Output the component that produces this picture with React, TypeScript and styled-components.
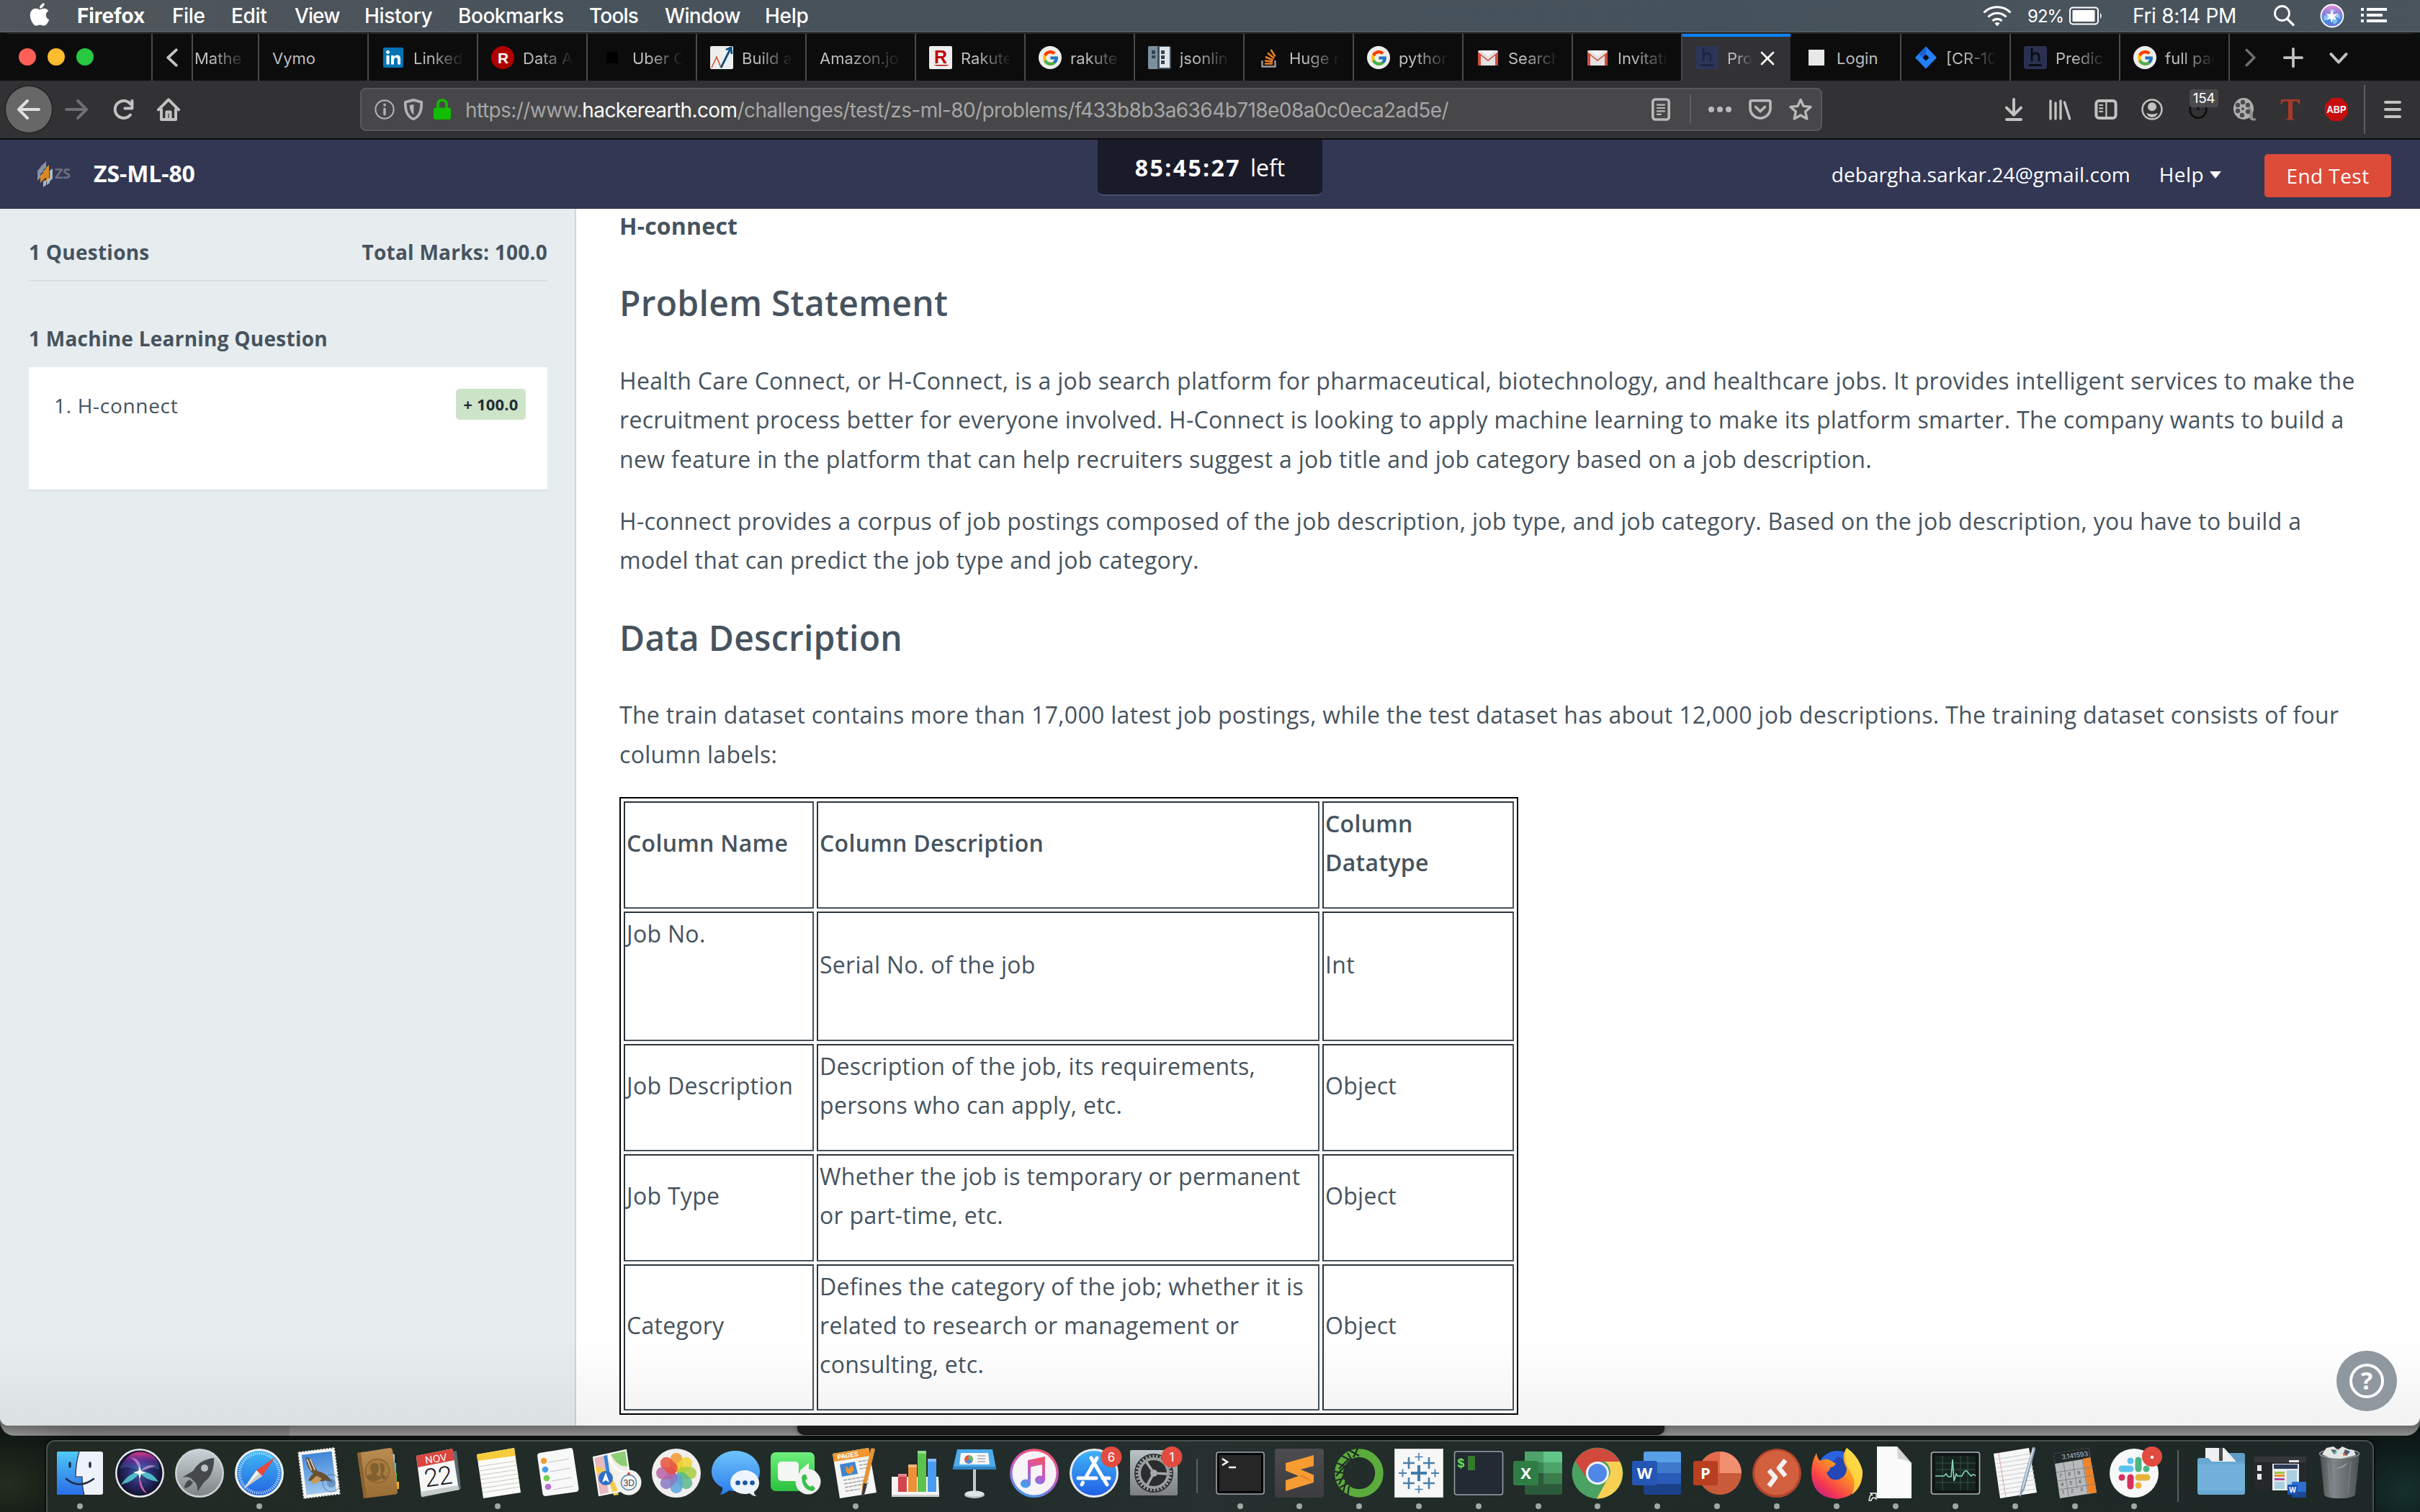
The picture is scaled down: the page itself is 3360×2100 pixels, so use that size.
import React from "react";
import styled, { createGlobalStyle, css } from "styled-components";
import { FaApple } from "react-icons/fa";
import { FcGoogle } from "react-icons/fc";

const ui = `Inter, "Liberation Sans", sans-serif`;
const body = `"Open Sans", "Noto Sans", sans-serif`;

const Global = createGlobalStyle`
  * { box-sizing: border-box; }
  html, body { margin: 0; padding: 0; }
  body { width: 3360px; height: 2100px; overflow: hidden; background: #0c1412; }
  svg { display: block; flex: none; }
  p, h2 { margin: 0; }
`;

/* ---------- desktop ---------- */

const Desktop = styled.div`
  width: 3360px;
  height: 2100px;
  display: flex;
  flex-direction: column;
  overflow: hidden;
  font-family: ${ui};
  background:
    radial-gradient(ellipse 120px 90px at 10px 2060px, #252c1f, transparent),
    radial-gradient(ellipse 110px 90px at 3340px 2070px, #16302e, transparent),
    #0a1210;
`;

const MenuBar = styled.div`
  height: 46px;
  flex: none;
  display: flex;
  align-items: center;
  padding: 0 46px 2px 38px;
  color: #fff;
  background: linear-gradient(90deg, #50565b 0, #47525b 1000px, #46525b 2400px, #4a545d 100%);
  box-shadow: inset 0 -1px 0 #0a0a0a, inset 0 -2px 0 #626a70;
`;

const MenuItem = styled.span<{ $w: number; $ls?: number; $bold?: boolean }>`
  width: ${(p) => p.$w}px;
  flex: none;
  white-space: nowrap;
  font-size: 28px;
  line-height: 44px;
  font-weight: ${(p) => (p.$bold ? 700 : 450)};
  letter-spacing: ${(p) => p.$ls ?? 0}px;
`;

const Apple = styled(FaApple)`
  width: 36px;
  height: 36px;
  margin: 0 34px 4px -1px;
`;

const Status = styled.div`
  margin-left: auto;
  display: flex;
  align-items: center;
`;

const Percent = styled.span`
  width: 58px;
  margin-left: 22px;
  font-size: 24px;
  letter-spacing: -1px;
  white-space: nowrap;
`;

const Clock = styled.span`
  width: 195px;
  margin-left: 41px;
  font-size: 28px;
  letter-spacing: -0.3px;
  white-space: nowrap;
`;

const SiriSlot = styled.span`
  width: 90px;
  display: flex;
  justify-content: center;
  padding-left: 10px;
`;

/* ---------- browser chrome ---------- */

const Browser = styled.div`
  height: 1934px;
  flex: none;
  display: flex;
  flex-direction: column;
  position: relative;
  overflow: hidden;
  border-radius: 12px;
  z-index: 1;
`;

const TabStrip = styled.div`
  height: 66px;
  flex: none;
  display: flex;
  background: #0c0c0d;
  border-top: 1px solid #2d2d2e;
`;

const Lights = styled.div`
  width: 212px;
  display: flex;
  gap: 16px;
  padding: 20px 0 0 26px;
  border-right: 2px solid #4a4a4b;
`;

const Light = styled.i<{ $c: string }>`
  width: 24px;
  height: 24px;
  border-radius: 50%;
  background: ${(p) => p.$c};
`;

const TabArrow = styled.div<{ $w: number; $line?: boolean }>`
  width: ${(p) => p.$w}px;
  display: flex;
  align-items: center;
  justify-content: center;
  ${(p) => p.$line && css`border-right: 2px solid #4a4a4b;`}
`;

const Tab = styled.div<{ $active?: boolean; $first?: boolean }>`
  width: ${(p) => (p.$first ? 92 : 152)}px;
  flex: none;
  display: flex;
  align-items: center;
  gap: 12px;
  padding: ${(p) => (p.$first ? "3px 18px 0 2px" : "3px 20px 0 18px")};
  border-right: 2px solid #4a4a4b;
  ${(p) =>
    p.$active &&
    css`
      background: #323234;
      border-right-color: #0c0c0d;
      box-shadow: inset 0 4px 0 #0a84ff;
      padding-right: 22px;
    `}
`;

const TabTitle = styled.span<{ $fade?: boolean }>`
  flex: 1;
  min-width: 0;
  overflow: hidden;
  white-space: nowrap;
  font-size: 22px;
  line-height: 32px;
  color: #bdbdbe;
  ${(p) => p.$fade && css`mask-image: linear-gradient(90deg, #000 35%, rgba(0, 0, 0, 0.05) 100%);`}
`;

const Fav = styled.span<{ $bg?: string; $round?: boolean }>`
  width: 32px;
  height: 32px;
  flex: none;
  display: flex;
  align-items: center;
  justify-content: center;
  overflow: hidden;
  margin-bottom: 2px;
  background: ${(p) => p.$bg ?? "transparent"};
  border-radius: ${(p) => (p.$round ? "50%" : "2px")};
`;

const Toolbar = styled.div`
  height: 82px;
  flex: none;
  display: flex;
  align-items: center;
  padding-left: 8px;
  background: #323234;
  border-bottom: 2px solid #0c0c0d;
`;

const BackButton = styled.div`
  width: 64px;
  height: 64px;
  display: flex;
  align-items: center;
  justify-content: center;
  border-radius: 50%;
  background: #676767;
  box-shadow: 0 0 0 1.5px #232324;
`;

const Slot = styled.div<{ $w: number }>`
  width: ${(p) => p.$w}px;
  height: 60px;
  flex: none;
  display: flex;
  align-items: center;
  justify-content: center;
  position: relative;
`;

const UrlBar = styled.div`
  width: 2030px;
  height: 60px;
  margin: 0 234px;
  display: flex;
  align-items: center;
  padding-left: 12px;
  border: 2px solid #59595b;
  border-radius: 8px;
  background: #474749;
`;

const Url = styled.span`
  flex: 1;
  padding: 2px 0 0 12px;
  font-size: 28px;
  letter-spacing: -0.57px;
  color: #a6a6a7;
  white-space: nowrap;
  b {
    font-weight: 400;
    color: #f9f9fa;
  }
`;

const Rule = styled.i<{ $h: number; $m: string }>`
  width: 2px;
  height: ${(p) => p.$h}px;
  margin: ${(p) => p.$m};
  background: #5d5f66;
`;

const CountBadge = styled.span`
  position: absolute;
  top: 2px;
  left: 20px;
  width: 40px;
  height: 25px;
  border-radius: 4px;
  background: #4a4a4c;
  color: #fff;
  font-size: 19px;
  line-height: 25px;
  letter-spacing: -0.4px;
  text-align: center;
`;

/* ---------- page ---------- */

const PageHeader = styled.header`
  height: 96px;
  flex: none;
  display: grid;
  grid-template-columns: 1524px 312px 1524px;
  background: #323754;
  font-family: ${body};
  color: #fff;
`;

const Brand = styled.div`
  display: flex;
  align-items: center;
  gap: 28px;
  padding-left: 50px;
  font-size: 32px;
  font-weight: 700;
  letter-spacing: -0.1px;
  span {
    margin-top: -3px;
  }
`;

const Timer = styled.div`
  height: 78px;
  display: flex;
  justify-content: center;
  gap: 13px;
  padding-top: 5px;
  border-bottom: 2px solid #494c6f;
  border-radius: 0 0 8px 8px;
  background: #1a1b29;
  font-size: 32px;
  line-height: 68px;
  b {
    letter-spacing: 2.4px;
  }
`;

const Account = styled.div`
  display: flex;
  justify-content: flex-end;
  align-items: center;
  padding: 4px 40px 0 0;
  font-size: 28px;
  letter-spacing: 0.07px;
`;

const Email = styled.span`
  margin-top: -5px;
`;

const HelpLink = styled.span`
  margin: -5px 60px 0 40px;
  display: flex;
  align-items: center;
  gap: 8px;
  letter-spacing: 0.4px;
  &::after {
    content: "";
    margin-top: 3px;
    border: 8px solid transparent;
    border-top: 10px solid #fff;
    border-bottom: 0;
  }
`;

const EndTest = styled.button`
  width: 176px;
  height: 60px;
  padding: 0;
  border: 0;
  border-radius: 5px;
  background: #dd4b39;
  color: #fff;
  font: 28px/58px ${body};
  letter-spacing: 0.45px;
`;

const PageBody = styled.div`
  flex: 1;
  min-height: 0;
  display: flex;
  font-family: ${body};
  color: #46535e;
  background: #fff;
`;

const Sidebar = styled.aside`
  width: 800px;
  flex: none;
  padding: 30px 38px 0 40px;
  background: #e7ecef;
  border-right: 2px solid #cfd4d7;
  font-size: 28px;
`;

const Totals = styled.div`
  height: 71px;
  display: flex;
  justify-content: space-between;
  padding-bottom: 11px;
  border-bottom: 2px solid #d8dde0;
  font-weight: 700;
  line-height: 60px;
  letter-spacing: 0.25px;
  white-space: nowrap;
`;

const GroupTitle = styled.div`
  padding-top: 49px;
  height: 119px;
  font-weight: 700;
  line-height: 60px;
  letter-spacing: 0.25px;
`;

const Card = styled.div`
  width: 720px;
  height: 172px;
  display: flex;
  justify-content: space-between;
  align-items: flex-start;
  padding: 30px 30px 0 35px;
  border-bottom: 2px solid #dde0e2;
  background: #fff;
  line-height: 46px;
  letter-spacing: 0.7px;
`;

const Marks = styled.span`
  width: 97px;
  height: 43px;
  border-radius: 5px;
  background: #cde4c9;
  color: #232c34;
  font-size: 22px;
  font-weight: 700;
  line-height: 43px;
  letter-spacing: 0.2px;
  text-align: center;
`;

const Main = styled.main`
  flex: 1;
  padding: 0 80px 0 60px;
  margin-top: -3px;
  clip-path: inset(3px 0 0 0);
  font-size: 32px;
  line-height: 54.4px;
  letter-spacing: 0.3px;
  p {
    margin-bottom: 32px;
  }
`;

const Line = styled.span`
  display: block;
  white-space: nowrap;
`;

const Strong = styled.p`
  font-weight: 700;
  letter-spacing: 0.2px;
`;

const Heading = styled.h2`
  font-size: 48px;
  font-weight: 600;
  line-height: 96.4px;
  letter-spacing: 0.28px;
  margin-bottom: 32px;
`;

const Table = styled.table`
  width: 1248px;
  table-layout: fixed;
  border: 2px solid #000;
  border-collapse: separate;
  border-spacing: 4px;
`;

const Cell = styled.td<{ $w?: number; $top?: boolean; $h?: number; $head?: boolean }>`
  ${(p) => p.$w && css`width: ${p.$w}px;`}
  ${(p) => p.$h && css`height: ${p.$h}px;`}
  padding: 2px;
  vertical-align: ${(p) => (p.$top ? "top" : "middle")};
  border: 2px solid;
  border-color: #2b343b #46535e #46535e #2b343b;
  ${(p) => p.$head && css`font-weight: 600;`}
`;

const BottomShade = styled.div`
  position: absolute;
  left: 0;
  right: 0;
  bottom: 0;
  height: 120px;
  pointer-events: none;
  background: linear-gradient(180deg, rgba(0, 0, 0, 0) 0, rgba(0, 0, 0, 0.05) 100%);
`;

const HelpBubble = styled.div`
  position: absolute;
  right: 32px;
  bottom: 20px;
  width: 84px;
  height: 84px;
  border-radius: 50%;
  background: #8f979f;
  display: flex;
  align-items: center;
  justify-content: center;
  span {
    width: 48px;
    height: 48px;
    border: 4px solid #fff;
    border-radius: 50%;
    color: #fff;
    font: 700 34px/39px "Open Sans", sans-serif;
    text-align: center;
  }
`;

/* ---------- windows peeking out below, dock ---------- */

const Behind = styled.div`
  height: 26px;
  flex: none;
  margin-top: -12px;
  padding-top: 12px;
  display: flex;
  justify-content: center;
  border-radius: 0 0 20px 20px;
  background: linear-gradient(180deg, rgba(0, 0, 0, 0.25) 12px, rgba(0, 0, 0, 0) 100%),
    linear-gradient(90deg, #959595 0, #7e7e7e 100px, #7e7e7e 402px, #8e8e8e 402px);
`;

const BehindPanel = styled.div`
  width: 1204px;
  height: 13px;
  margin-left: 58px;
  border-radius: 0 0 10px 10px;
  background: #1b1b1b;
  border-bottom: 1px solid #050505;
  box-shadow: 0 0 6px rgba(0, 0, 0, 0.5);
`;

const Dock = styled.div`
  height: 120px;
  width: 3232px;
  flex: none;
  margin: 6px 0 0 64px;
  display: flex;
  padding: 8px 0 0 4px;
  border: 2px solid #48514e;
  border-radius: 12px;
  background: linear-gradient(90deg, #212a24 0, #222c2a 40%, #26312f 50%, #212b28 60%, #1e2826 100%);
  box-shadow: 0 0 0 1.5px #050908;
`;

const DockItem = styled.div<{ $w?: number; $run?: boolean }>`
  width: ${(p) => p.$w ?? 82.8}px;
  flex: none;
  display: flex;
  flex-direction: column;
  align-items: center;
  gap: 6px;
  svg {
    overflow: visible;
  }
  &::after {
    content: "";
    width: 8px;
    height: 8px;
    border-radius: 50%;
    background: ${(p) => (p.$run ? "#a0a8a5" : "transparent")};
  }
`;

const DockRule = styled.i<{ $w: number; $h: number; $t: number }>`
  width: ${(p) => p.$w}px;
  display: flex;
  justify-content: center;
  &::after {
    content: "";
    width: 2px;
    height: ${(p) => p.$h}px;
    margin-top: ${(p) => p.$t}px;
    background: #56605d;
  }
`;

/* ---------- small glyphs ---------- */

type GP = { children: React.ReactNode; c?: string; s?: number; w?: number };
const G = ({ children, c = "#c2c2c3", s = 32, w = 2 }: GP) => (
  <svg width={s} height={s} viewBox="0 0 16 16" fill="none" stroke={c} strokeWidth={w} strokeLinecap="round" strokeLinejoin="round">
    {children}
  </svg>
);

const Wifi = () => (
  <svg width="40" height="30" viewBox="0 0 40 30" fill="none" stroke="#fff" strokeWidth="3.2">
    <path d="M1.5 10.5a26 26 0 0 1 37 0M7.5 16.5a17.5 17.5 0 0 1 25 0M13.5 22a9.5 9.5 0 0 1 13 0" />
    <path d="M16.5 25.5a5 5 0 0 1 7 0L20 29.500z" fill="#fff" stroke="none" />
  </svg>
);
const Battery = () => (
  <svg width="47" height="26" viewBox="0 0 47 26">
    <rect x="1" y="1.500" width="39" height="23" rx="4" fill="none" stroke="#fff" strokeWidth="2" />
    <rect x="4.500" y="5" width="31" height="16" rx="1" fill="#fff" />
    <path d="M43 8.500q3.500 4.500 0 9z" fill="#fff" />
  </svg>
);
const MenuSiri = () => (
  <svg width="34" height="34" viewBox="0 0 34 34">
    <defs>
      <linearGradient id="msr" x1="0" y1="0" x2="0" y2="1">
        <stop offset="0" stopColor="#e88bd8" />
        <stop offset=".4" stopColor="#8c7fd8" />
        <stop offset=".7" stopColor="#3f8ee0" />
        <stop offset="1" stopColor="#6a6fd0" />
      </linearGradient>
    </defs>
    <circle cx="17" cy="17" r="15.500" fill="url(#msr)" stroke="#fff" strokeWidth="1.800" />
    <path d="M17 17L6 24q-2-6 2-8zM17 17l11 4q1-6-4-8zM17 17l2 12q5-2 5-6zM17 17l-4-8q5-2 8 0z" fill="#9fe6f7" opacity=".65" />
    <path d="M17 9l1.500 6 6-1-4 4 3 5-5-2-2.500 6-1.500-6-6 2 4-5-4-4 6 .5z" fill="#fff" opacity=".95" />
  </svg>
);
const Siri = () => (
  <svg width="72" height="72" viewBox="0 0 72 72">
    <defs>
      <radialGradient id="sb">
        <stop offset="0" stopColor="#3a5a9a" />
        <stop offset=".55" stopColor="#2a2a6c" />
        <stop offset="1" stopColor="#11122a" />
      </radialGradient>
      <linearGradient id="sl" x1="0" y1="0" x2="0" y2="1">
        <stop offset="0" stopColor="#ff3b8e" stopOpacity=".85" />
        <stop offset=".5" stopColor="#8b3fd0" stopOpacity=".4" />
        <stop offset="1" stopColor="#1fd0e8" stopOpacity=".2" />
      </linearGradient>
    </defs>
    <circle cx="36" cy="36" r="34" fill="#e9e6ee" />
    <circle cx="36" cy="36" r="31.500" fill="url(#sb)" />
    <path d="M8 30Q20 3 42 7T63 32Q50 24 36 34Q24 24 8 30z" fill="url(#sl)" />
    <path d="M36 35Q22 34 10 52Q28 48 36 35Q44 46 62 48Q52 32 36 35z" fill="#5be8e0" opacity=".75" />
    <path d="M36 34Q32 18 22 14Q41 16 36 34Q46 22 58 26Q46 30 36 34z" fill="#f5a3e6" opacity=".6" />
    <path d="M35 36Q38 56 46 64Q34 60 35 36z" fill="#ff6fc0" opacity=".8" />
    <path d="M36 27l2 6 7 2-7 2-2 7-2-7-7-2 7-2z" fill="#fff" />
  </svg>
);
const Search = () => (
  <svg width="32" height="32" viewBox="0 0 32 32" fill="none" stroke="#fff" strokeWidth="2.800">
    <circle cx="12.500" cy="12.500" r="10" />
    <path d="M19.500 20L29 29.500" strokeWidth="3.200" />
  </svg>
);
const ListIcon = () => (
  <svg width="36" height="22" viewBox="0 0 36 22" fill="#fff">
    <path d="M0 0h4v4H0zM8 0h28v4H8zM0 8h4v4H0zM8 8h22v4H8zM0 16h4v4H0zM8 16h28v4H8z" />
  </svg>
);
const CloseX = () => (
  <svg width="20" height="20" viewBox="0 0 20 20" stroke="#fff" strokeWidth="2.600" strokeLinecap="round">
    <path d="M2 2l16 16M18 2L2 18" />
  </svg>
);

const Gmail = () => (
  <svg width="28" height="21" viewBox="0 0 28 21">
    <rect width="28" height="21" rx="1.500" fill="#e3e3e3" />
    <path d="M0 21V2l14 11L28 2v19h-4V7L14 15 4 7v14z" fill="#d54b3d" />
    <path d="M4 0h20L14 8z" fill="#f4f4f4" />
  </svg>
);
const HeIcon = ({ c, bg }: { c: string; bg: string }) => (
  <svg width="32" height="32" viewBox="0 0 32 32">
    <rect width="32" height="32" rx="3" fill={bg} />
    <path d="M11 3v18M11 14q1-4 5.500-4 4.500 0 4.500 5v6M7 26.500h18" fill="none" stroke={c} strokeWidth="2.800" />
  </svg>
);
const favs: Record<string, React.ReactNode> = {
  in: (
    <Fav>
      <svg width="28" height="28" viewBox="0 0 28 28">
        <rect width="28" height="28" rx="2" fill="#0274b3" />
        <path d="M4.500 11h4v12.500h-4zM11 11h4v2q1.500-2.400 4.500-2.400 4.500 0 4.500 5.400v7.500h-4V17q0-3-2.300-3T15 17v6.500h-4z" fill="#fff" />
        <circle cx="6.500" cy="6.500" r="2.400" fill="#fff" />
      </svg>
    </Fav>
  ),
  R: (
    <Fav $bg="#b00000" $round>
      <svg width="32" height="32" viewBox="0 0 32 32">
        <text x="9" y="23.500" fontFamily="Liberation Sans" fontWeight="700" fontSize="21" fill="#fff">R</text>
      </svg>
    </Fav>
  ),
  sq: (
    <Fav>
      <svg width="16" height="16"><rect width="16" height="16" fill="#000" /></svg>
    </Fav>
  ),
  chart: (
    <Fav $bg="#eee">
      <svg width="32" height="32" viewBox="0 0 32 32" fill="none">
        <path d="M2 30L9 15l6 15" stroke="#d9502e" strokeWidth="1.600" />
        <path d="M15 30L28 4M22 5l7-3 1 9" stroke="#0d4f80" strokeWidth="2.800" />
      </svg>
    </Fav>
  ),
  rak: (
    <Fav $bg="#eee">
      <svg width="32" height="32" viewBox="0 0 32 32">
        <text x="7" y="24" fontFamily="Liberation Sans" fontWeight="700" fontSize="25" fill="#bf0000">R</text>
        <path d="M6 26h22l-4 1.500H11z" fill="#bf0000" />
      </svg>
    </Fav>
  ),
  g: (
    <Fav $bg="#eee" $round>
      <FcGoogle size={25} />
    </Fav>
  ),
  json: (
    <Fav $bg="#41525f">
      <svg width="32" height="32" viewBox="0 0 32 32">
        <rect x="0" width="13" height="32" fill="#7b8f9d" />
        <rect x="16" y="1" width="14" height="29" fill="#dfe5e9" />
        <path d="M5 6h5v5H5zM5 13h5v4H5zM18 6h5v5h-5zM18 13h5v5h-5zM18 20h5v5h-5z" fill="#34434f" />
      </svg>
    </Fav>
  ),
  so: (
    <Fav>
      <svg width="32" height="32" viewBox="0 0 32 32" fill="none">
        <path d="M6.500 20v8.500h18V20" stroke="#9a9c9f" strokeWidth="2.400" />
        <path d="M10 24.500h11M10 20.200l11 1.600M11 15l10.500 4.500M14 9.500l9 7.500M18.500 5l6 9.500" stroke="#ef8023" strokeWidth="2.500" />
      </svg>
    </Fav>
  ),
  m: (
    <Fav>
      <Gmail />
    </Fav>
  ),
  h1: (
    <Fav>
      <HeIcon c="#1c2540" bg="#2b3556" />
    </Fav>
  ),
  h2: (
    <Fav>
      <HeIcon c="#0a0d18" bg="#2a3150" />
    </Fav>
  ),
  w: (
    <Fav>
      <svg width="22" height="22"><rect width="22" height="22" fill="#e8e8e8" /></svg>
    </Fav>
  ),
  jira: (
    <Fav>
      <svg width="32" height="32" viewBox="0 0 32 32">
        <path fillRule="evenodd" d="M16 0.500L31 16 16 31.500 1 16zM16 11.500L11.500 16 16 20.500 20.500 16z" fill="#2380f8" />
        <path d="M16 11.500L11.500 16 6 10.500 16 .5z" fill="#1b5fd0" />
      </svg>
    </Fav>
  ),
};

const tabs: [string, string | null, boolean?][] = [
  ["Vymo", null, true],
  ["Linked", "in"],
  ["Data A", "R"],
  ["Uber C", "sq"],
  ["Build a", "chart"],
  ["Amazon.jo", null],
  ["Rakute", "rak"],
  ["rakute", "g"],
  ["jsonlin", "json"],
  ["Huge r", "so"],
  ["python", "g"],
  ["Search", "m"],
  ["Invitati", "m"],
  ["Pro", "h1"],
  ["Login", "w", true],
  ["[CR-10", "jira"],
  ["Predic", "h2"],
  ["full pag", "g"],
];

/* ---------- dock artwork, each on a 72 unit square ---------- */

const I = ({ children }: { children: React.ReactNode }) => (
  <svg width="72" height="72" viewBox="0 0 72 72">
    {children}
  </svg>
);
const LG = ({ id, a, b }: { id: string; a: string; b: string }) => (
  <linearGradient id={id} x1="0" y1="0" x2="0" y2="1">
    <stop offset="0" stopColor={a} />
    <stop offset="1" stopColor={b} />
  </linearGradient>
);
const Badge = ({ x, y, t, r = 14.5 }: { x: number; y: number; t: string; r?: number }) => (
  <g>
    <circle cx={x} cy={y} r={r} fill="#e24b3f" />
    <text x={x} y={y + 6} fontSize="17" fill="#fff" textAnchor="middle" fontFamily="Inter, sans-serif">{t}</text>
  </g>
);

const Finder = () => (
  <I>
    <LG id="fi" a="#4fc8f5" b="#2a6de8" />
    <rect x="4" y="6" width="64" height="60" rx="3" fill="#eef2fb" />
    <path d="M7 6h28q-5 18-5 35h9q0 14 3 25H7q-3 0-3-3V9q0-3 3-3z" fill="url(#fi)" />
    <path d="M35 6q-5 18-5 35h9q0 14 3 25" fill="none" stroke="#2b2f45" strokeWidth="1.200" />
    <path d="M22 22v5M50 22v5" stroke="#222b44" strokeWidth="3.400" strokeLinecap="round" />
    <path d="M17 44q18 15 38 0" fill="none" stroke="#222b44" strokeWidth="2.600" strokeLinecap="round" />
  </I>
);
const Launchpad = () => (
  <I>
    <LG id="lp" a="#c8d2d6" b="#7f8485" />
    <circle cx="36" cy="36" r="34" fill="#cdd3d5" />
    <circle cx="36" cy="36" r="31.500" fill="url(#lp)" />
    <path d="M56 15Q36 17 27 33l-15 9q8-2 12 1l7 7q3 5 2 12l9-13q15-11 14-34z" fill="#45494c" />
    <circle cx="43" cy="29" r="5" fill="#b9c1c4" />
    <path d="M22 45q-7 4-7 12 8-1 12-8z" fill="#45494c" />
  </I>
);
const Safari = () => (
  <I>
    <LG id="sf" a="#3fb6f5" b="#2565e0" />
    <circle cx="36" cy="36" r="34" fill="#eef0f1" />
    <circle cx="36" cy="36" r="31" fill="url(#sf)" />
    <circle cx="36" cy="36" r="27.500" fill="none" stroke="#cfe6fb" strokeWidth="4" strokeDasharray="1 1.880" />
    <path d="M58 14L40 40 32 32z" fill="#e8473c" />
    <path d="M14 58L40 40 32 32z" fill="#f3f1ee" />
    <path d="M14 58L40 40 36 36z" fill="#cfc9c4" />
  </I>
);
const Mail = () => (
  <I>
    <LG id="ml" a="#3f86d8" b="#9fc8ef" />
    <g transform="rotate(-7 36 36)">
      <rect x="10" y="3" width="52" height="66" fill="#f4f4f2" />
      <rect x="10" y="3" width="52" height="66" fill="none" stroke="#212a26" strokeWidth="2" strokeDasharray="2 2.200" />
      <rect x="15" y="8" width="42" height="56" fill="url(#ml)" />
      <path d="M21 12q5 0 8 8l5 13q12 3 19 18-9-5-15-3l-5-3-13 0q2-6 8-9-9-9-7-24z" fill="#6a4f33" />
      <path d="M22 15l4 16M26 15l5 16" stroke="#e6dccb" strokeWidth="1.500" />
      <path d="M24 45l8-6 7 5-6 5-9 1z" fill="#c49a5c" />
    </g>
    <circle cx="53" cy="50" r="12" fill="none" stroke="#3b4f6c" strokeWidth="1" opacity=".6" />
    <circle cx="53" cy="50" r="6" fill="#3a5a86" opacity=".4" />
  </I>
);
const Contacts = () => (
  <I>
    <LG id="ct" a="#b98c50" b="#9a6d35" />
    <path d="M54 8l5 2 0 14h-5z" fill="#b6c6cc" />
    <path d="M56 22h5v16h-5z" fill="#4fb7d8" />
    <path d="M57 36h5v12h-5z" fill="#62b64a" />
    <path d="M58 48h7v10h-7z" fill="#f1a935" />
    <path d="M7 8l45-7q3 0 4 3l7 58q0 3-3 3.500L16 71z" fill="url(#ct)" />
    <path d="M7 8l5-1 8 63-4 1z" fill="#8c6332" />
    <circle cx="35" cy="33" r="16.500" fill="#a77b40" stroke="#8a6230" strokeWidth="1.500" />
    <path d="M31 22q6 0 6 7 0 5-3 7v3q5 1 7 4-6 5-13 4-7-2-9-6 3-3 8-4v-3q-2-2-2-6 0-6 6-6z" fill="#83602f" />
    <path d="M40 22q6 1 5 8 0 4-2 6v3l5 2q-2 3-5 4l-4-5q2-8-1-17z" fill="#83602f" />
  </I>
);
const Calendar = () => (
  <I>
    <path d="M6 16l56-11 6 53-54 12z" fill="#5d6a72" />
    <path d="M6 12L56 2l9 57-52 9z" fill="#f7f7f7" />
    <path d="M6 12L56 2l3 16L8 28z" fill="#d8463e" />
    <path d="M12 62l52-9 2 6-53 10z" fill="#c9cccd" />
    <text x="34" y="21" transform="rotate(-9 34 20)" fontSize="14" fill="#fff" textAnchor="middle" fontFamily="Inter, sans-serif">NOV</text>
    <text x="37" y="53" transform="rotate(-8 36 44)" fontSize="35" fill="#1c1c1c" textAnchor="middle" fontFamily="Roboto, sans-serif" fontWeight="300">22</text>
  </I>
);
const Notes = () => (
  <I>
    <path d="M7 10L59 1l9 62-52 8z" fill="#fbfbf8" />
    <path d="M7 10L59 1l1.500 11L8 19z" fill="#f6cc3c" />
    <path d="M9 27l53-8M10 33l53-8M11 39l53-8M12 45l53-8M13 51l52-8M14 57l52-8M15 63l52-8" stroke="#c8c8c4" strokeWidth="1" />
  </I>
);
const Reminders = () => (
  <I>
    <path d="M11 8l43-7q3 0 3.500 3l8 53q0 4-3 5l-43 6q-3 0-4-3L8 12q0-3 3-4z" fill="#f8f8f8" />
    <circle cx="17" cy="19" r="4.300" fill="#f29a38" />
    <circle cx="19" cy="31" r="4.300" fill="#3f9fee" />
    <circle cx="21" cy="43" r="4.300" fill="#6fcf4e" />
    <circle cx="23" cy="55" r="4.300" fill="#bb6fd8" />
    <path d="M24 21l28-5M26 34l28-5M28 47l28-5M30 59l28-5" stroke="#c4c4c4" strokeWidth="1.200" />
  </I>
);
const Maps = () => (
  <I>
    <path d="M3 14L48 4l8 54-45 9z" fill="#f3eee6" />
    <path d="M3 14l14-3 7 54-13 2z" fill="#e9b9c0" />
    <path d="M17 11h5l6 40-5 1z" fill="#3a83d8" />
    <path d="M26 8L48 4l3 22q-14 4-25-18z" fill="#8fce76" />
    <path d="M4 26q24 2 34 40l-7 1Q24 38 5 34z" fill="#f5c94c" />
    <path d="M24 9q6 28 29 26" fill="none" stroke="#fff" strokeWidth="3" />
    <path d="M3 14L48 4l8 54-45 9z" fill="none" stroke="#fff" strokeWidth="2" />
    <circle cx="20" cy="43" r="10" fill="#2b6fc9" />
    <path d="M20 35l5 14-5-3-5 3z" fill="#fff" />
    <circle cx="52" cy="49" r="17.500" fill="#f4f4f2" />
    <circle cx="52" cy="49" r="10.500" fill="none" stroke="#5d88a4" strokeWidth="1.500" />
    <path d="M52 34l2.500 4h-5z" fill="#d9382c" />
    <text x="52" y="53.500" fontSize="12" fill="#444" textAnchor="middle" fontFamily="Inter, sans-serif">3D</text>
  </I>
);
const Photos = () => (
  <I>
    <circle cx="36" cy="36" r="34" fill="#f0efee" />
    {["#f3992e", "#f0d42f", "#a9cc3e", "#5cb98a", "#5aa3dc", "#8a79c6", "#b862a6", "#e8503c"].map((c, i) => (
      <rect key={c} x="27.500" y="8" width="17" height="27" rx="8.500" fill={c} opacity=".85" transform={`rotate(${i * 45} 36 36)`} />
    ))}
  </I>
);
const Messages = () => (
  <I>
    <LG id="ms" a="#6fc4f9" b="#2a7cf0" />
    <path d="M35 5c19 0 34 13 34 29S54 61 35 61q-5 0-9-1-5 5-13 6 5-4 4-10C7 51 2 43 2 34 2 18 16 5 35 5z" fill="url(#ms)" />
    <path d="M48 32c11 0 20 8 20 17 0 6-3 10-7 13 0 3 1 5 4 6-5 0-8-2-10-4-3 1-5 1-7 1-11 0-20-7-20-16s9-17 20-17z" fill="#eef4fc" />
    <circle cx="38.500" cy="49.500" r="3.300" fill="#1b56a6" />
    <circle cx="48.500" cy="49.500" r="3.300" fill="#1b56a6" />
    <circle cx="58.500" cy="49.500" r="3.300" fill="#1b56a6" />
  </I>
);
const FaceTime = () => (
  <I>
    <LG id="ft" a="#6df07c" b="#2bc13f" />
    <rect x="1" y="7" width="61" height="54" rx="7" fill="url(#ft)" />
    <rect x="11" y="20" width="29" height="27" rx="5" fill="#f3f6f3" />
    <path d="M42 32l12-10v22l-12-8z" fill="#f3f6f3" />
    <circle cx="53" cy="48" r="17.500" fill="#f3f3f3" />
    <path d="M46 38l4 0 2 6-3 2q2 6 7 9l3-2 4 4-3 4Q45 60 44 42z" fill="#3bc04c" />
  </I>
);
const Pages = () => (
  <I>
    <path d="M4 9L54 1l11 62-51 8z" fill="#f6f6f4" />
    <path d="M4 9L54 1l2.500 11L6 20z" fill="#f0962e" />
    <text x="11" y="17" transform="rotate(-9 11 17)" fontSize="9" fontWeight="700" fill="#fff" fontFamily="Inter, sans-serif">PAGES</text>
    <path d="M14 24l21-4 4 17-22 4z" fill="#3d86cf" />
    <path d="M22 26l5 4 4-6 3 7-5 7-6-3z" fill="#f0912e" />
    <path d="M40 20l14-2M41 25l13-2M42 30l12-2M19 46l35-6M20 51l34-6M21 56l33-6M22 61l20-3" stroke="#a5a5a5" strokeWidth="1.600" strokeDasharray="5 1" />
    <path d="M57 2q4-2 6 1L50 56l-4 12-2-1 1-13z" fill="#e39435" />
    <path d="M47 50l5 1-3 12-3 6-2-1z" fill="#3b3b3e" />
  </I>
);
const Numbers = () => (
  <I>
    <path d="M3 41h65l1 26H3z" fill="#f4f4f4" />
    <rect x="3" y="66" width="66" height="3" fill="#cfcfcf" />
    <rect x="12" y="37" width="12" height="25" fill="#d3454c" />
    <rect x="26" y="24" width="12" height="38" fill="#eb9136" />
    <rect x="39" y="5" width="12" height="57" fill="#5dc34f" />
    <rect x="53" y="16" width="12" height="46" fill="#4a9cf0" />
    <path d="M12 37h12v4H12zM26 24h12v4H26zM39 5h12v4H39zM53 16h12v4H53z" fill="#fff" opacity=".35" />
  </I>
);
const Keynote = () => (
  <I>
    <path d="M12 3h49l5 26H6z" fill="#4cabea" />
    <path d="M6 27h60v4H6z" fill="#2f82c4" />
    <path d="M17 8h38l2 16H15z" fill="#f5f7f8" />
    <circle cx="28" cy="17" r="6" fill="#e0574a" />
    <path d="M28 17v-6a6 6 0 0 1 5 9z" fill="#5bbf6a" />
    <path d="M28 17l5 3a6 6 0 0 1-10 0z" fill="#4a90d9" />
    <path d="M40 12h11M40 16h11M40 20h11" stroke="#aaa" strokeWidth="1.500" />
    <rect x="34" y="31" width="4" height="32" fill="#c3c9cc" />
    <ellipse cx="36" cy="66" rx="14" ry="5" fill="#b5bfc6" />
    <ellipse cx="36" cy="64.500" rx="13" ry="4" fill="#dfe5e9" />
  </I>
);
const ITunes = () => (
  <I>
    <defs>
      <linearGradient id="it" x1=".7" y1="0" x2=".3" y2="1">
        <stop offset="0" stopColor="#f2556a" />
        <stop offset=".5" stopColor="#c259c8" />
        <stop offset="1" stopColor="#3f9ff0" />
      </linearGradient>
    </defs>
    <circle cx="36" cy="36" r="34" fill="url(#it)" />
    <circle cx="36" cy="36" r="30.500" fill="#f7f4f8" />
    <path d="M27 18l24-5v33a7 6 0 1 1-4-6V24l-16 3.500V51a7 6 0 1 1-4-6z" fill="url(#it)" />
  </I>
);
const AppStore = () => (
  <I>
    <LG id="as" a="#3fb3f6" b="#2160e6" />
    <circle cx="36" cy="36" r="34" fill="#e9eaec" />
    <circle cx="36" cy="36" r="31" fill="url(#as)" />
    <path d="M32 15l22 37M40 15L24 43M14 43h25M48 43h9M19 52l1.500-3" stroke="#fff" strokeWidth="5" strokeLinecap="round" />
    <Badge x={60} y={13.5} t="6" />
  </I>
);
const Prefs = () => (
  <I>
    <LG id="pr" a="#b9c3c8" b="#7d8080" />
    <rect x="3" y="4" width="66" height="63" rx="2" fill="url(#pr)" />
    <circle cx="36" cy="36" r="27" fill="#2a2c2d" />
    <circle cx="36" cy="36" r="20" fill="none" stroke="#9a9d9e" strokeWidth="4" />
    <circle cx="36" cy="36" r="23.500" fill="none" stroke="#9a9d9e" strokeWidth="4" strokeDasharray="2.500 2.420" />
    <path d="M36 36L26 21M36 36l18 1M36 36L27 52" stroke="#a5a8a9" strokeWidth="3.500" />
    <circle cx="36" cy="36" r="5" fill="#a5a8a9" />
    <Badge x={61} y={13.5} t="1" />
  </I>
);
const Terminal = () => (
  <I>
    <rect x="3" y="7" width="66" height="58" rx="3" fill="#050505" stroke="#a4acb2" strokeWidth="1.500" />
    <rect x="7" y="11" width="58" height="50" fill="#262626" />
    <path d="M11 16l7 4.500-7 4.500M20 28h10" fill="none" stroke="#fff" strokeWidth="2.600" />
  </I>
);
const Sublime = () => (
  <I>
    <LG id="su" a="#4d4c4f" b="#3c3b3e" />
    <rect x="2" y="2" width="68" height="68" rx="4" fill="url(#su)" />
    <path d="M56 11v15L38 31l18 7.500V49L17 61V46l18-6-18-7.500V22z" fill="#f79b33" />
    <path d="M56 49L35 40l5-2z" fill="#c9741c" opacity=".5" />
  </I>
);
const Anaconda = () => (
  <I>
    <circle cx="36" cy="36" r="28" fill="none" stroke="#5bac3c" strokeWidth="11.500" />
    <path d="M34 2L28 14M22 4l14 8M12 12l16 8M5 22l16 6M2 34l14 2M4 46l13-3M9 56l12-6M20 68l2-14M8 30l14-14M4 40l12-14M8 52l8-16M14 62l4-16M20 8l6 10" stroke="#212a26" strokeWidth="2.200" />
  </I>
);
const Tableau = () => {
  const plus: [number, number, number, string, number][] = [
    [36, 36, 11, "#3f7cad", 4], [22, 22, 8, "#4a80ab", 2.6], [50, 22, 8, "#4a80ab", 2.6], [22, 50, 8, "#4a80ab", 2.6],
    [50, 50, 8, "#4a80ab", 2.6], [36, 13.5, 5.5, "#4a80ab", 1.6], [36, 58.5, 5.5, "#4a80ab", 1.6], [13.5, 36, 5.5, "#4a80ab", 1.8], [58.5, 36, 5.5, "#4a80ab", 1.8],
  ];
  return (
    <I>
      <rect x="2.500" y="2.500" width="67" height="67" fill="#f7f7f8" stroke="#cfcfd0" />
      {plus.map(([x, y, r, c, w], i) => (
        <path key={i} d={`M${x - r} ${y}h${2 * r}M${x} ${y - r}v${2 * r}`} stroke={c} strokeWidth={w} />
      ))}
    </I>
  );
};
const ITerm = () => (
  <I>
    <rect x="2.500" y="6" width="67" height="60" rx="3" fill="#222a33" stroke="#9aa4ac" strokeWidth="1.500" />
    <rect x="21" y="12" width="10" height="20" fill="#357a2d" />
    <text x="6" y="28" fontSize="18" fontWeight="700" fill="#6ee052" fontFamily="Liberation Mono, monospace">$</text>
  </I>
);
const Word = () => (
  <I>
    <rect x="17" y="6" width="52" height="60" rx="3" fill="#1d4189" />
    <path d="M17 9q0-3 3-3h46q3 0 3 3v12H17z" fill="#57a0e6" />
    <path d="M17 21h52v15H17z" fill="#3f79cc" />
    <path d="M17 36h52v15H17z" fill="#2a5bb8" />
    <rect x="1" y="19" width="35" height="34" rx="3" fill="#2456b3" />
    <text x="18.500" y="44" fontSize="22" fontWeight="700" fill="#fff" textAnchor="middle" fontFamily="Open Sans, sans-serif">W</text>
  </I>
);
const Excel = () => (
  <I>
    <rect x="17" y="6" width="52" height="60" rx="3" fill="#2c5b3b" />
    <path d="M17 6h26v15H17z" fill="#4ea36a" />
    <path d="M43 6h23q3 0 3 3v12H43z" fill="#62c58a" />
    <path d="M17 21h26v15H17z" fill="#3b8452" />
    <path d="M43 21h26v15H43z" fill="#4ea36a" />
    <path d="M43 36h26v15H43z" fill="#3c7d4e" />
    <rect x="1" y="19" width="35" height="34" rx="3" fill="#2f7d45" />
    <text x="18.500" y="44" fontSize="22" fontWeight="700" fill="#fff" textAnchor="middle" fontFamily="Open Sans, sans-serif">X</text>
  </I>
);
const Chrome = () => (
  <I>
    <circle cx="36" cy="36" r="35.500" fill="#4ba263" />
    <path d="M5 19A35.500 35.500 0 0 1 67 20H36a16 16 0 0 0-15 11z" fill="#d0493c" />
    <path d="M67 20A35.500 35.500 0 0 1 35 71.500L50 44a16 16 0 0 0-4-24z" fill="#f8d053" />
    <path d="M5 19l16 24a16 16 0 0 1 15-23z" fill="#d0493c" />
    <circle cx="36" cy="36" r="16" fill="#f3f5f7" />
    <circle cx="36" cy="36" r="13" fill="#5088ea" />
  </I>
);
const PowerPoint = () => (
  <I>
    <circle cx="40" cy="36" r="30" fill="#c95a3a" />
    <path d="M40 6a30 30 0 0 1 30 30H40z" fill="#f18f70" />
    <path d="M40 6v30H10A30 30 0 0 1 40 6z" fill="#e3694a" />
    <rect x="3" y="19" width="34" height="34" rx="3" fill="#b83f1f" />
    <text x="20" y="44" fontSize="22" fontWeight="700" fill="#fff" textAnchor="middle" fontFamily="Open Sans, sans-serif">P</text>
  </I>
);
const Remote = () => (
  <I>
    <circle cx="36" cy="36" r="34" fill="#b0442c" />
    <circle cx="36" cy="35.500" r="31" fill="#d2603f" />
    <path d="M48 18L39 29l9 11M25 32l9 10-9 12" fill="none" stroke="#f3f1f0" strokeWidth="6.500" strokeLinejoin="round" />
  </I>
);
const FirefoxIcon = () => (
  <I>
    <defs>
      <linearGradient id="ff" x1="1" y1="0" x2="0.200" y2="1">
        <stop offset="0" stopColor="#ffe34d" />
        <stop offset=".45" stopColor="#ff9a1f" />
        <stop offset=".8" stopColor="#f5394e" />
        <stop offset="1" stopColor="#c51f8a" />
      </linearGradient>
    </defs>
    <circle cx="37" cy="33" r="28" fill="#2a63e0" />
    <path d="M37 13q14 3 15 19-2 18-18 21-16 0-18-14" fill="#2447b5" />
    <path d="M8 8q1 7 5 11 9-5 17 1l5 3q-3 5-8 5 0 5-5 7 4 12 16 10 12-4 12-16Q41 14 50 1q17 12 22 32 1 34-35 39Q2 70 1 36 1 20 8 8z" fill="url(#ff)" />
    <path d="M50 1q17 12 22 32 0 22-15 33 8-18-2-32-10-15-5-33z" fill="#ffe14a" opacity=".75" />
  </I>
);
const Doc = () => (
  <I>
    <path d="M10-1h28l20 23v49H10z" fill="#fafafa" />
    <path d="M38-1l1 17q8 0 19 6z" fill="#d3d3d3" />
    <path d="M-1 74q1-10 5-7l-3-3h8v8l-3-2q-3 0-4 4z" fill="#1f2725" stroke="#fff" strokeWidth="1.300" />
  </I>
);
const Activity = () => (
  <I>
    <rect x="2.500" y="7" width="67" height="58" rx="3" fill="#111414" stroke="#b2b8ba" strokeWidth="1.600" />
    <rect x="8" y="12" width="56" height="48" fill="#16231f" />
    <path d="M8 22h56M8 31h56M8 49h56M18 12v48M43 12v48M53 12v48" stroke="#35544a" strokeWidth="1" />
    <path d="M8 40h12l3-3 3 4h4l2-24 2 30 3-10 2 3h6q5-12 9-4l4 4q3-4 6 0" fill="none" stroke="#86d8c2" strokeWidth="1.600" />
  </I>
);
const TextEdit = () => (
  <I>
    <path d="M6 9L55 1l11 62-51 8z" fill="#f7f7f7" />
    <path d="M8 17l50-8M9 23l50-8M10 29l50-8M11 35l50-8M12 41l50-8M13 47l50-8M14 53l50-8M15 59l50-8M16 65l48-7" stroke="#c6cad0" strokeWidth="1" />
    <path d="M13 8l10 62" stroke="#e2a3a3" strokeWidth="1" />
    <path d="M60 0q4-1 4 3L49 58l-6 11-1-1 2-12z" fill="#8fa3b5" />
    <path d="M61 2L46 58" stroke="#dce8f2" strokeWidth="1.500" />
  </I>
);
const Calc = () => (
  <I>
    <path d="M6 9L55 1l11 62-51 8z" fill="#b7babb" />
    <path d="M6 9L55 1l2 14L8 23z" fill="#23282a" />
    <path d="M47 16l10-2 9 49-11 2z" fill="#f08326" />
    <path d="M10 35l51-8M12 47l51-8M14 59l51-8M20 21l7 47M33 19l6 38M46 16l8 50" stroke="#7e8284" strokeWidth="1" />
    <text x="18" y="17" transform="rotate(-8 18 17)" fontSize="9" fill="#b9c2c2" fontFamily="Inter, sans-serif">3.141593</text>
    <g fontSize="6.500" fill="#444" fontFamily="Inter, sans-serif">
      <text x="14" y="42">7</text><text x="26" y="40">8</text><text x="39" y="38">9</text>
      <text x="16" y="54">4</text><text x="28" y="52">5</text><text x="41" y="50">6</text>
      <text x="18" y="65">1</text><text x="30" y="63">2</text><text x="43" y="61">3</text>
    </g>
  </I>
);
const Slack = () => (
  <I>
    <circle cx="36" cy="36" r="34" fill="#f8f8f8" />
    <g strokeWidth="9" strokeLinecap="round">
      <path d="M19 30h12" stroke="#5cc3ee" /><path d="M31 19v0" stroke="#5cc3ee" />
      <path d="M42 18v12" stroke="#4bb583" /><path d="M53 30v0" stroke="#4bb583" />
      <path d="M31 42v12" stroke="#d6305f" /><path d="M19 42v0" stroke="#d6305f" />
      <path d="M42 42h12" stroke="#e6b33d" /><path d="M42 53v0" stroke="#e6b33d" />
    </g>
    <circle cx="61" cy="13" r="14" fill="#e24b3f" />
    <circle cx="61" cy="14" r="2.300" fill="#fff" />
  </I>
);
const Folder = () => (
  <I>
    <path d="M38 8h28q3 0 3 3v20H38z" fill="#5f9cc6" />
    <path d="M14 1h26l16 18v10H14z" fill="#eeeff0" />
    <path d="M33 1h5v18h-5z" fill="#4a4a4a" />
    <path d="M3 18q0-3 3-3h12l5 5h43q3 0 3 3v40q0 3-3 3H6q-3 0-3-3z" fill="#68a9d3" />
    <path d="M3 24h66v36H3z" fill="#72b2da" />
  </I>
);
const MiniWindow = () => (
  <I>
    <rect x="0" y="13" width="72" height="47" fill="#26282b" />
    <rect x="0" y="13" width="72" height="8" fill="#34373a" />
    <path d="M48 18h14v3H48zM4 25h6v8H4zM4 37h6v8H4z" fill="#e8e8e8" />
    <rect x="25" y="23" width="37" height="37" fill="#e9edf0" />
    <path d="M27 24h33v6H27z" fill="#2c3a56" />
    <path d="M28 34h14v3H28z" fill="#a6c23c" /><path d="M28 38h14v3H28z" fill="#e88b2c" /><path d="M28 43h14v3H28z" fill="#b04a9e" />
    <path d="M45 32h14v26H45zM28 48h14v10H28z" fill="#a9cfe0" />
    <rect x="52" y="48" width="20" height="22" rx="1" fill="#2e6fce" />
    <path d="M52 62h20v8H52z" fill="#1c4794" />
    <rect x="46" y="52" width="14" height="14" rx="1" fill="#1d52b5" />
    <text x="53" y="63" fontSize="10" fontWeight="700" fill="#fff" textAnchor="middle" fontFamily="Open Sans, sans-serif">W</text>
  </I>
);
const Trash = () => (
  <I>
    <defs>
      <linearGradient id="tr">
        <stop offset="0" stopColor="#4a4f50" />
        <stop offset=".35" stopColor="#80868a" />
        <stop offset="1" stopColor="#4c5254" />
      </linearGradient>
    </defs>
    <path d="M9 8l55 0-6 58q-3 5-22 5t-21-5z" fill="url(#tr)" />
    <ellipse cx="36" cy="9" rx="27.500" ry="6" fill="#383c3e" stroke="#90979a" strokeWidth="1.500" />
    <path d="M12 10l6-9 10-2 6 5 6-5 9 4 7 1 3 7-8 2-13 3-15-1z" fill="#e4e5e5" />
    <path d="M24 3l8 1-3 6zM44 3l7 3-5 6-5-2z" fill="#565b62" />
    <path d="M28 6l5 0-2 4z" fill="#3ec7c5" /><path d="M41 8l4 1-3 4z" fill="#e2692c" /><path d="M46 5l4 1-2 3z" fill="#3556b5" />
    <path d="M30 30q10-2 18-9-4 8-18 9z" fill="#c5cbcd" opacity=".7" />
    <path d="M20 20l4 44M52 20l-4 44" stroke="#a5abad" strokeWidth="2" opacity=".25" />
  </I>
);

const dockApps: [React.ReactNode, boolean][] = [
  [<Finder />, true], [<Siri />, false], [<Launchpad />, false], [<Safari />, true], [<Mail />, false],
  [<Contacts />, false], [<Calendar />, false], [<Notes />, true], [<Reminders />, false], [<Maps />, false],
  [<Photos />, false], [<Messages />, false], [<FaceTime />, false], [<Pages />, true], [<Numbers />, false],
  [<Keynote />, false], [<ITunes />, false], [<AppStore />, false], [<Prefs />, false],
];
const dockTools: React.ReactNode[] = [
  <Terminal />, <Sublime />, <Anaconda />, <Tableau />, <ITerm />, <Excel />, <Chrome />, <Word />,
  <PowerPoint />, <Remote />, <FirefoxIcon />, <Doc />, <Activity />, <TextEdit />, <Calc />, <Slack />,
];

const menus: [string, number, number][] = [
  ["File", 82, -0.4], ["Edit", 88, -0.3], ["View", 97, -0.9], ["History", 130, -0.3], ["Bookmarks", 182, -0.45],
  ["Tools", 105, -0.8], ["Window", 139, -0.7], ["Help", 80, -0.3],
];

const rows: { name: string; desc: string[]; type: string; h?: number }[] = [
  { name: "Job No.", desc: ["Serial No. of the job"], type: "Int", h: 180 },
  { name: "Job Description", desc: ["Description of the job, its requirements,", "persons who can apply, etc."], type: "Object" },
  { name: "Job Type", desc: ["Whether the job is temporary or permanent", "or part-time, etc."], type: "Object" },
  { name: "Category", desc: ["Defines the category of the job; whether it is", "related to research or management or", "consulting, etc."], type: "Object" },
];

const Para = ({ lines }: { lines: string[] }) => (
  <p>
    {lines.map((l) => (
      <Line key={l}>{l} </Line>
    ))}
  </p>
);

export default function App() {
  return (
    <Desktop>
      <Global />
      <MenuBar>
        <Apple />
        <MenuItem $w={132} $bold $ls={-0.1}>Firefox</MenuItem>
        {menus.map(([t, w, ls]) => (
          <MenuItem key={t} $w={w} $ls={ls}>{t}</MenuItem>
        ))}
        <Status>
          <Wifi />
          <Percent>92%</Percent>
          <Battery />
          <Clock>Fri 8:14 PM</Clock>
          <Search />
          <SiriSlot><MenuSiri /></SiriSlot>
          <ListIcon />
        </Status>
      </MenuBar>

      <Browser>
        <TabStrip>
          <Lights>
            <Light $c="#ff5f57" />
            <Light $c="#febc2e" />
            <Light $c="#28c840" />
          </Lights>
          <TabArrow $w={56} $line>
            <G s={26} w={2.4}><path d="M11.500 1.500L4.500 8l7 6.500" /></G>
          </TabArrow>
          <Tab $first><TabTitle $fade>Mathe</TabTitle></Tab>
          {tabs.map(([t, f, full], i) => (
            <Tab key={i} $active={f === "h1"}>
              {f && favs[f]}
              <TabTitle $fade={!full}>{t}</TabTitle>
              {f === "h1" && <CloseX />}
            </Tab>
          ))}
          <TabArrow $w={58}>
            <G s={26} w={2.2} c="#6e6e6f"><path d="M4.500 1.500L11 8l-6.500 6.500" /></G>
          </TabArrow>
          <TabArrow $w={60}>
            <G s={30} w={2}><path d="M8 1.500v13M1.500 8h13" /></G>
          </TabArrow>
          <TabArrow $w={66}>
            <G s={26} w={2.4}><path d="M1.500 5L8 12l6.500-7" /></G>
          </TabArrow>
        </TabStrip>

        <Toolbar>
          <BackButton>
            <G c="#e0e0e1"><path d="M15 8H1.500M7 2L1 8l6 6" /></G>
          </BackButton>
          <Slot $w={68}><G c="#6f6f71"><path d="M1 8h13.500M9 2l6 6-6 6" /></G></Slot>
          <Slot $w={62}><G><path d="M13 11.800A6 6 0 1 1 13 4.200M14.200 2v5.200H9.200" /></G></Slot>
          <Slot $w={64}>
            <G><path d="M1 8.200L8 1.200l7 7M3 8v7h10V8M6.700 15v-5.200h2.600V15" /></G>
          </Slot>
          <UrlBar>
            <Slot $w={40}>
              <G s={28} c="#b1b1b3" w={1.2}><circle cx="8" cy="8" r="7.200" /><path d="M8 4.200v.4M8 7.500v4.400" strokeWidth="2" /></G>
            </Slot>
            <Slot $w={40}>
              <G s={30} c="#b1b1b3" w={2}><path d="M2 2.600L8 1l6 1.600c0 6-1 10.400-6 12.600-5-2.200-6-6.600-6-12.600z" /><path d="M8.200 4.200v7.800c-2-1.400-3-4-3-7.200z" fill="#b1b1b3" stroke="none" /></G>
            </Slot>
            <Slot $w={40}>
              <svg width="24" height="30" viewBox="0 0 24 30"><path d="M6 14V8q0-6 6-6t6 6v6" fill="none" stroke="#12bc00" strokeWidth="3.600" /><rect y="12.500" width="24" height="16.500" rx="3" fill="#12bc00" /></svg>
            </Slot>
            <Url>https://www.<b>hackerearth.com</b>/challenges/test/zs-ml-80/problems/f433b8b3a6364b718e08a0c0eca2ad5e/</Url>
            <Slot $w={56}>
              <G c="#b9b9ba" w={1.8}><rect x="2.400" y="1" width="11.200" height="14" rx="1.800" /><path d="M5.500 4.800h5M5.500 7h5M5.500 9.200h5M5.500 11.400h2.500" strokeWidth="1.100" /></G>
            </Slot>
            <Rule $h={42} $m="0 12px" />
            <Slot $w={56}>
              <svg width="32" height="8" fill="#b9b9ba"><circle cx="4" cy="4" r="4" /><circle cx="16" cy="4" r="4" /><circle cx="28" cy="4" r="4" /></svg>
            </Slot>
            <Slot $w={56}>
              <G c="#b9b9ba" w={1.8}><path d="M2 1.900h12q1 0 1 1v4.200a7 7 0 0 1-14 0V2.900q0-1 1-1z" /><path d="M4.800 6.200L8 9.400l3.200-3.200" /></G>
            </Slot>
            <Slot $w={56}>
              <G c="#b9b9ba" w={1.7}><path d="M8 1.200l2 4.500 5 .5-3.700 3.300 1.100 5L8 12l-4.400 2.500 1.100-5L1 6.200l5-.5z" /></G>
            </Slot>
          </UrlBar>
          <Slot $w={64}><G><path d="M8 1v10M3 6.800l5 5 5-5M3 15h10" /></G></Slot>
          <Slot $w={64}><G w={1.7}><path d="M1.500 2v12.500M5 3.500v11M8.500 2v12.500M11.200 3l3.600 11.500" /></G></Slot>
          <Slot $w={64}><G w={2}><rect x="1.200" y="2" width="13.600" height="12" rx="2" /><path d="M8.200 2v12M3.600 5h2M3.600 7.200h2M3.600 9.400h2" strokeWidth="1.100" /></G></Slot>
          <Slot $w={64}><G s={30} w={1.3}><circle cx="8" cy="8" r="7.200" /><circle cx="8" cy="6" r="3.200" fill="#c2c2c3" stroke="none" /><path d="M3.800 10.500q4.200 2 8.400 0-1 3.300-4.200 3.300t-4.200-3.300z" fill="#c2c2c3" stroke="none" /></G></Slot>
          <Slot $w={64}>
            <G s={28} c="#0d0d0e" w={1.5}><path d="M3.500 3.500a6.500 6.500 0 1 0 9 0M8 2v6" /></G>
            <CountBadge>154</CountBadge>
          </Slot>
          <Slot $w={64}>
            <svg width="32" height="32" viewBox="0 0 32 32"><ellipse cx="15" cy="15" rx="14" ry="15" fill="#b0b0b0" /><path d="M22 12q6 2 6 16 3 1 4 0v3q-6 2-9-3z" fill="#8f8f90" />{[[14, 6], [21, 10], [21, 19], [13, 24], [7, 18], [7, 10]].map(([x, y]) => <circle key={`${x}-${y}`} cx={x} cy={y} r="3.200" fill="#4b4b4d" />)}<circle cx="14" cy="15" r="2" fill="#4b4b4d" /></svg>
          </Slot>
          <Slot $w={64}>
            <svg width="28" height="32" viewBox="0 0 28 32"><path d="M1 2h26l.5 7h-1.500q-1-4.500-5-4.500h-4V27q0 2 3 2.500v1H8v-1q3-.5 3-2.500V4.500H7Q3 4.500 2 9H.5z" fill="#a83a28" /></svg>
          </Slot>
          <Slot $w={64}>
            <svg width="32" height="32" viewBox="0 0 32 32"><path d="M9.500 0h13L32 9.500v13L22.500 32h-13L0 22.500v-13z" fill="#c70d0d" /><text x="16" y="21" fontSize="14" fontWeight="700" fill="#fff" textAnchor="middle" textLength="27" lengthAdjust="spacingAndGlyphs" fontFamily="Liberation Sans">ABP</text></svg>
          </Slot>
          <Rule $h={68} $m="0 0 0 6px" />
          <Slot $w={76}>
            <svg width="24" height="24" stroke="#c2c2c3" strokeWidth="4" strokeLinecap="round"><path d="M2 2h20M2 12h20M2 22h20" /></svg>
          </Slot>
        </Toolbar>

        <PageHeader>
          <Brand>
            <svg width="52" height="36" viewBox="0 0 52 36">
              <path d="M2 13l4-4v14l-4 4zM6 8l4-4v10l-4 4zM10 4l4-4v9l-4 3z" fill="#8493a4" />
              <path d="M14 9l4-4v20l-4 4zM10 14l4-4v12l-4 4zM6 20l4-4v10l-4 4z" fill="#d98a24" />
              <path d="M19 13l4-3v14l-4 4zM15 26l4-3v7l-4 3zM10 28l4-2v7l-4 3z" fill="#aeb7c2" />
              <text x="26" y="24" fontSize="20" fill="#6a6f80" fontFamily="Open Sans, sans-serif" letterSpacing="-.5">ZS</text>
            </svg>
            <span>ZS-ML-80</span>
          </Brand>
          <Timer>
            <b>85:45:27</b>
            <span>left</span>
          </Timer>
          <Account>
            <Email>debargha.sarkar.24@gmail.com</Email>
            <HelpLink>Help</HelpLink>
            <EndTest>End Test</EndTest>
          </Account>
        </PageHeader>

        <PageBody>
          <Sidebar>
            <Totals>
              <span>1 Questions</span>
              <span>Total Marks: 100.0</span>
            </Totals>
            <GroupTitle>1 Machine Learning Question</GroupTitle>
            <Card>
              1. H-connect
              <Marks>+ 100.0</Marks>
            </Card>
          </Sidebar>
          <Main>
            <Strong>H-connect</Strong>
            <Heading>Problem Statement</Heading>
            <Para
              lines={[
                "Health Care Connect, or H-Connect, is a job search platform for pharmaceutical, biotechnology, and healthcare jobs. It provides intelligent services to make the",
                "recruitment process better for everyone involved. H-Connect is looking to apply machine learning to make its platform smarter. The company wants to build a",
                "new feature in the platform that can help recruiters suggest a job title and job category based on a job description.",
              ]}
            />
            <Para
              lines={[
                "H-connect provides a corpus of job postings composed of the job description, job type, and job category. Based on the job description, you have to build a",
                "model that can predict the job type and job category.",
              ]}
            />
            <Heading>Data Description</Heading>
            <Para
              lines={[
                "The train dataset contains more than 17,000 latest job postings, while the test dataset has about 12,000 job descriptions. The training dataset consists of four",
                "column labels:",
              ]}
            />
            <Table>
              <tbody>
                <tr>
                  <Cell $head $w={264}><Para lines={["Column Name"]} /></Cell>
                  <Cell $head $w={698}><Para lines={["Column Description"]} /></Cell>
                  <Cell $head><Para lines={["Column", "Datatype"]} /></Cell>
                </tr>
                {rows.map((r) => (
                  <tr key={r.name}>
                    <Cell $top={!!r.h} $h={r.h}><Para lines={[r.name]} /></Cell>
                    <Cell><Para lines={r.desc} /></Cell>
                    <Cell><Para lines={[r.type]} /></Cell>
                  </tr>
                ))}
              </tbody>
            </Table>
          </Main>
        </PageBody>
        <BottomShade />
        <HelpBubble><span>?</span></HelpBubble>
      </Browser>

      <Behind>
        <BehindPanel />
      </Behind>

      <Dock>
        {dockApps.map(([icon, run], i) => (
          <DockItem key={i} $run={run}>{icon}</DockItem>
        ))}
        <DockRule $w={37} $h={48} $t={16} />
        {dockTools.map((icon, i) => (
          <DockItem key={i} $run>{icon}</DockItem>
        ))}
        <DockRule $w={38} $h={72} $t={4} />
        <DockItem $w={82}><Folder /></DockItem>
        <DockItem $w={82}><MiniWindow /></DockItem>
        <DockItem $w={82}><Trash /></DockItem>
      </Dock>
    </Desktop>
  );
}
